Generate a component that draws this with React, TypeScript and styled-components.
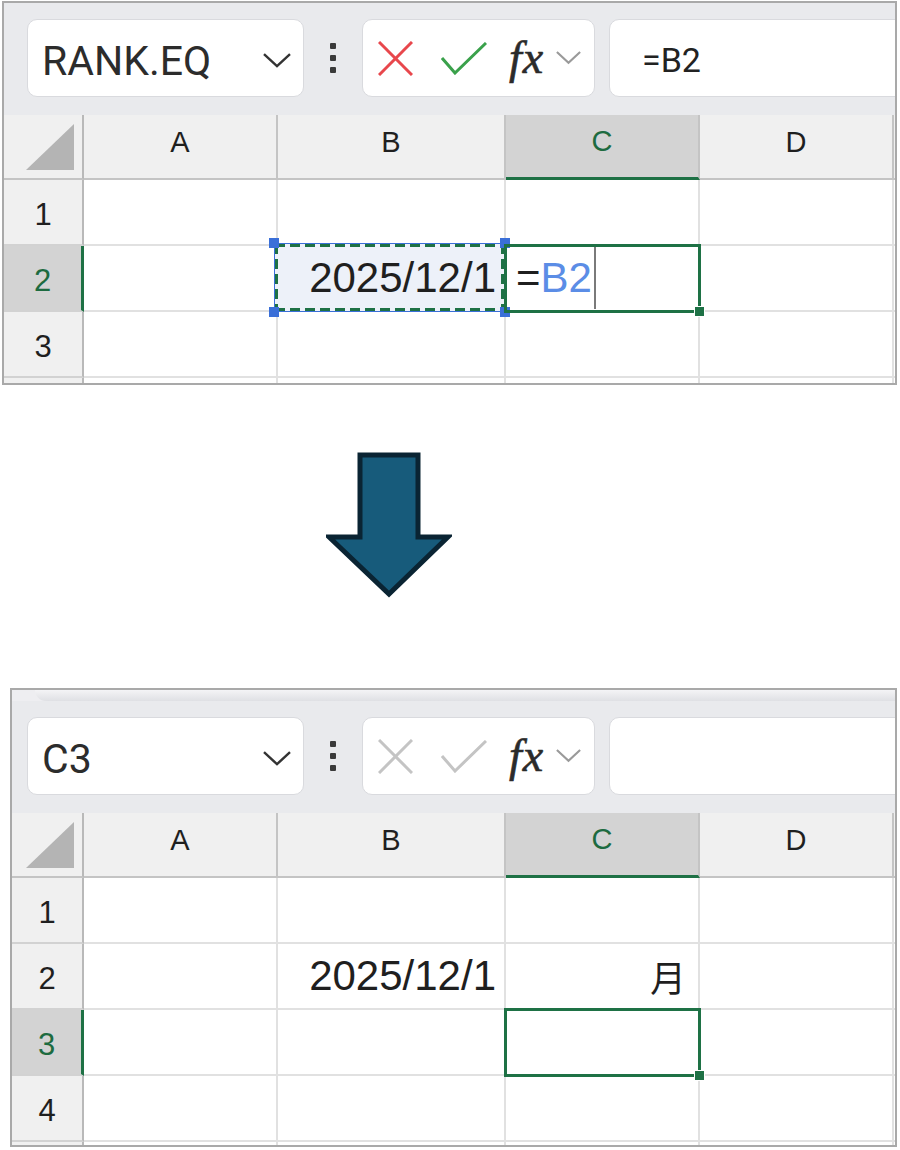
import React from 'react'
import styled, { createGlobalStyle } from 'styled-components'

const GlobalStyle = createGlobalStyle`
  html, body {
    margin: 0;
    padding: 0;
    background: #fff;
  }
  body {
    font-family: "Liberation Sans", Arial, sans-serif;
  }
`

const GREEN = '#1e7145'
const BLUE = '#3a6fd8'

const Page = styled.div`
  width: 900px;
  height: 1150px;
  display: flex;
  flex-direction: column;
  overflow: hidden;
`

const Shot = styled.div<{ $left: number; $top: number; $height: number }>`
  margin: ${p => p.$top}px 0 0 ${p => p.$left}px;
  width: ${p => 897 - p.$left}px;
  height: ${p => p.$height}px;
  box-sizing: border-box;
  border: 2px solid #a9a9a9;
  overflow: hidden;
  display: flex;
  flex-direction: column;
  flex-shrink: 0;
  background: #fff;
`

const RibbonEdge = styled.div<{ $pad: number }>`
  height: 11px;
  flex-shrink: 0;
  background: #eeeef1;
  padding-left: ${p => p.$pad + 8}px;

  &::before {
    content: '';
    display: block;
    height: 100%;
    border-bottom-left-radius: 12px;
    background: linear-gradient(#f4f4f6, #dfe0e4);
  }
`

const Toolbar = styled.div<{ $pad: number }>`
  display: flex;
  align-items: stretch;
  height: 112px;
  flex-shrink: 0;
  box-sizing: border-box;
  padding: 16px 0 18px ${p => p.$pad}px;
  background: #e9eaed;
`

const NameBox = styled.div`
  width: 277px;
  box-sizing: border-box;
  display: flex;
  align-items: center;
  justify-content: space-between;
  padding: 6px 12px 0 14px;
  background: #fff;
  border: 1px solid #d9dade;
  border-radius: 10px;
  font-family: Roboto, "Liberation Sans", sans-serif;
  font-size: 41px;
  color: #2c2c2c;
`

const Ellipsis = styled.div`
  width: 7px;
  margin: 0 25px 0 26px;
  display: flex;
  flex-direction: column;
  justify-content: center;
  gap: 6px;

  span {
    width: 6px;
    height: 6px;
    border-radius: 1px;
    background: #3a3a3a;
  }
`

const CommandBox = styled.div`
  width: 233px;
  box-sizing: border-box;
  display: flex;
  align-items: center;
  padding-left: 15px;
  background: #fff;
  border: 1px solid #d9dade;
  border-radius: 10px;
`

const Fx = styled.span`
  margin: 0 12px 0 22px;
  font-family: "Liberation Serif", "Times New Roman", serif;
  font-style: italic;
  font-size: 46px;
  letter-spacing: 1px;
  color: #2b2b2b;
  line-height: 1;
  -webkit-text-stroke: 0.6px #2b2b2b;
`

const FormulaBox = styled.div`
  flex: 1;
  margin: 0 -30px 0 14px;
  display: flex;
  align-items: center;
  padding: 4px 0 0 32px;
  background: #fff;
  border: 1px solid #d9dade;
  border-radius: 10px;
  font-family: Roboto, "Liberation Sans", sans-serif;
  font-size: 34px;
  color: #222;
`

const Grid = styled.div<{ $rh: number }>`
  display: grid;
  grid-template-columns: ${p => p.$rh}px 194px 228px 194px 194px 1fr;
  grid-template-rows: 65px;
  grid-auto-rows: 66px;
`

const Corner = styled.div`
  display: flex;
  align-items: flex-end;
  justify-content: flex-end;
  padding: 0 8px 8px 0;
  background: #f0f0f0;
  border-right: 2px solid #b9b9b9;
  border-bottom: 2px solid #c4c4c4;
`

const ColHead = styled.div<{ $active?: boolean }>`
  display: flex;
  align-items: center;
  justify-content: center;
  padding-bottom: 9px;
  font-size: 29px;
  color: ${p => (p.$active ? '#1d6b40' : '#1f1f1f')};
  background: ${p => (p.$active ? '#d3d3d3' : '#f0f0f0')};
  border-right: 2px solid #c4c4c4;
  border-bottom: ${p => (p.$active ? `3px solid ${GREEN}` : '2px solid #c4c4c4')};
`

const RowHead = styled.div<{ $active?: boolean }>`
  display: flex;
  align-items: center;
  justify-content: center;
  padding-top: 5px;
  font-size: 31px;
  color: ${p => (p.$active ? '#1d6b40' : '#1f1f1f')};
  background: ${p => (p.$active ? '#d3d3d3' : '#f0f0f0')};
  border-right: ${p => (p.$active ? `3px solid ${GREEN}` : '2px solid #b9b9b9')};
  border-bottom: 2px solid #d2d2d2;
`

const Cell = styled.div<{ $align?: 'left' | 'right' }>`
  position: relative;
  display: flex;
  align-items: center;
  justify-content: ${p => (p.$align === 'right' ? 'flex-end' : 'flex-start')};
  padding: 0 8px 0 10px;
  border-right: 2px solid #e1e1e1;
  border-bottom: 2px solid #e1e1e1;
`

const CellText = styled.span<{ $color?: string; $cjk?: boolean }>`
  position: relative;
  z-index: 2;
  color: ${p => p.$color || '#1f1f1f'};
  font-family: ${p =>
    p.$cjk ? '"Noto Sans CJK JP", sans-serif' : '"Liberation Sans", Arial, sans-serif'};
  font-size: ${p => (p.$cjk ? '36px' : '42px')};
  margin-right: ${p => (p.$cjk ? '4px' : '0')};
`

const Caret = styled.span`
  position: relative;
  z-index: 2;
  align-self: stretch;
  width: 2px;
  margin: 1px 0 1px 2px;
  background: #7a7a7a;
`

const dash = (dir: string) =>
  `repeating-linear-gradient(${dir}, ${GREEN} 0 10px, transparent 10px 15px)`

const RefBox = styled.div`
  position: absolute;
  inset: -3px -1px -2px -4px;
  z-index: 1;
  border: 1px solid ${BLUE};
  background:
    ${dash('90deg')} top left / 100% 3px no-repeat,
    ${dash('90deg')} bottom left / 100% 3px no-repeat,
    ${dash('180deg')} top left / 3px 100% no-repeat,
    ${dash('180deg')} top right / 3px 100% no-repeat,
    #edf1f9;
`

const Handle = styled.span<{ $v: 'top' | 'bottom'; $h: 'left' | 'right' }>`
  position: absolute;
  ${p => p.$v}: -6px;
  ${p => p.$h}: -6px;
  width: 10px;
  height: 10px;
  background: ${BLUE};
`

const ActiveBox = styled.div`
  position: absolute;
  inset: -2px -3px -3px -2px;
  z-index: 1;
  border: 3px solid ${GREEN};
`

const FillHandle = styled.span`
  position: absolute;
  right: -7px;
  bottom: -7px;
  width: 9px;
  height: 9px;
  background: ${GREEN};
  border: 1px solid #fff;
`

const ArrowRow = styled.div`
  height: 303px;
  flex-shrink: 0;
  padding: 67px 0 0 326px;
  box-sizing: border-box;
`

const Chevron = ({ w, color }: { w: number; color: string }) => (
  <svg width={w} height={w * 0.55} viewBox="0 0 28 15">
    <polyline points="1,1 14,13 27,1" fill="none" stroke={color} strokeWidth="2.4" />
  </svg>
)

const CancelIcon = ({ color }: { color: string }) => (
  <svg width="35" height="35" viewBox="0 0 35 35">
    <line x1="1" y1="1" x2="34" y2="34" stroke={color} strokeWidth="3" />
    <line x1="34" y1="1" x2="1" y2="34" stroke={color} strokeWidth="3" />
  </svg>
)

const EnterIcon = ({ color }: { color: string }) => (
  <svg width="46" height="33" viewBox="0 0 46 33" style={{ marginLeft: 28 }}>
    <polyline points="1,16 14,31 45,1" fill="none" stroke={color} strokeWidth="3" />
  </svg>
)

const CornerTriangle = () => (
  <svg width="48" height="46" viewBox="0 0 48 46">
    <polygon points="48,0 48,46 0,46" fill="#b4b4b4" />
  </svg>
)

type ShotProps = {
  left: number
  top: number
  height: number
  name: string
  formula: string
  editing: boolean
  activeRow: number
  labelled: number
  ribbon?: boolean
  rows: React.ReactNode[][]
}

function Sheet({
  left,
  top,
  height,
  name,
  formula,
  editing,
  activeRow,
  labelled,
  ribbon,
  rows,
}: ShotProps) {
  const pad = 27 - left - 2
  const rh = 84 - left - 2
  return (
    <Shot $left={left} $top={top} $height={height}>
      {ribbon && <RibbonEdge $pad={pad} />}
      <Toolbar $pad={pad}>
        <NameBox>
          <span>{name}</span>
          <Chevron w={28} color="#333" />
        </NameBox>
        <Ellipsis>
          <span />
          <span />
          <span />
        </Ellipsis>
        <CommandBox>
          <CancelIcon color={editing ? '#e8474c' : '#c4c4c4'} />
          <EnterIcon color={editing ? '#3aa14b' : '#c4c4c4'} />
          <Fx>fx</Fx>
          <Chevron w={25} color="#9a9a9a" />
        </CommandBox>
        <FormulaBox>{formula}</FormulaBox>
      </Toolbar>
      <Grid $rh={rh}>
        <Corner>
          <CornerTriangle />
        </Corner>
        <ColHead>A</ColHead>
        <ColHead>B</ColHead>
        <ColHead $active>C</ColHead>
        <ColHead>D</ColHead>
        <ColHead />
        {rows.map((cells, i) => (
          <React.Fragment key={i}>
            <RowHead $active={i + 1 === activeRow}>{i < labelled ? i + 1 : ''}</RowHead>
            {cells}
          </React.Fragment>
        ))}
      </Grid>
    </Shot>
  )
}

const blanks = (n: number) => Array.from({ length: n }, (_, i) => <Cell key={i} />)

export default function App() {
  const topRows: React.ReactNode[][] = [
    blanks(5),
    [
      <Cell key="a" />,
      <Cell key="b" $align="right">
        <RefBox>
          <Handle $v="top" $h="left" />
          <Handle $v="top" $h="right" />
          <Handle $v="bottom" $h="left" />
          <Handle $v="bottom" $h="right" />
        </RefBox>
        <CellText>2025/12/1</CellText>
      </Cell>,
      <Cell key="c">
        <ActiveBox>
          <FillHandle />
        </ActiveBox>
        <CellText>=</CellText>
        <CellText $color="#5b8de6">B2</CellText>
        <Caret />
      </Cell>,
      <Cell key="d" />,
      <Cell key="e" />,
    ],
    blanks(5),
    blanks(5),
  ]

  const bottomRows: React.ReactNode[][] = [
    blanks(5),
    [
      <Cell key="a" />,
      <Cell key="b" $align="right">
        <CellText>2025/12/1</CellText>
      </Cell>,
      <Cell key="c" $align="right">
        <CellText $cjk>月</CellText>
      </Cell>,
      <Cell key="d" />,
      <Cell key="e" />,
    ],
    [
      <Cell key="a" />,
      <Cell key="b" />,
      <Cell key="c">
        <ActiveBox>
          <FillHandle />
        </ActiveBox>
      </Cell>,
      <Cell key="d" />,
      <Cell key="e" />,
    ],
    blanks(5),
    blanks(5),
  ]

  return (
    <Page>
      <GlobalStyle />
      <Sheet
        left={2}
        top={1}
        height={384}
        name="RANK.EQ"
        formula="=B2"
        editing
        activeRow={2}
        labelled={3}
        rows={topRows}
      />
      <ArrowRow>
        <svg width="126" height="146" viewBox="0 0 126 146">
          <polygon
            points="34,3 92,3 92,85 122,85 63,142 3,85 34,85"
            fill="#175b7b"
            stroke="#0a2433"
            strokeWidth="5"
          />
        </svg>
      </ArrowRow>
      <Sheet
        left={10}
        top={0}
        height={459}
        name="C3"
        formula=""
        editing={false}
        activeRow={3}
        labelled={4}
        ribbon
        rows={bottomRows}
      />
    </Page>
  )
}
